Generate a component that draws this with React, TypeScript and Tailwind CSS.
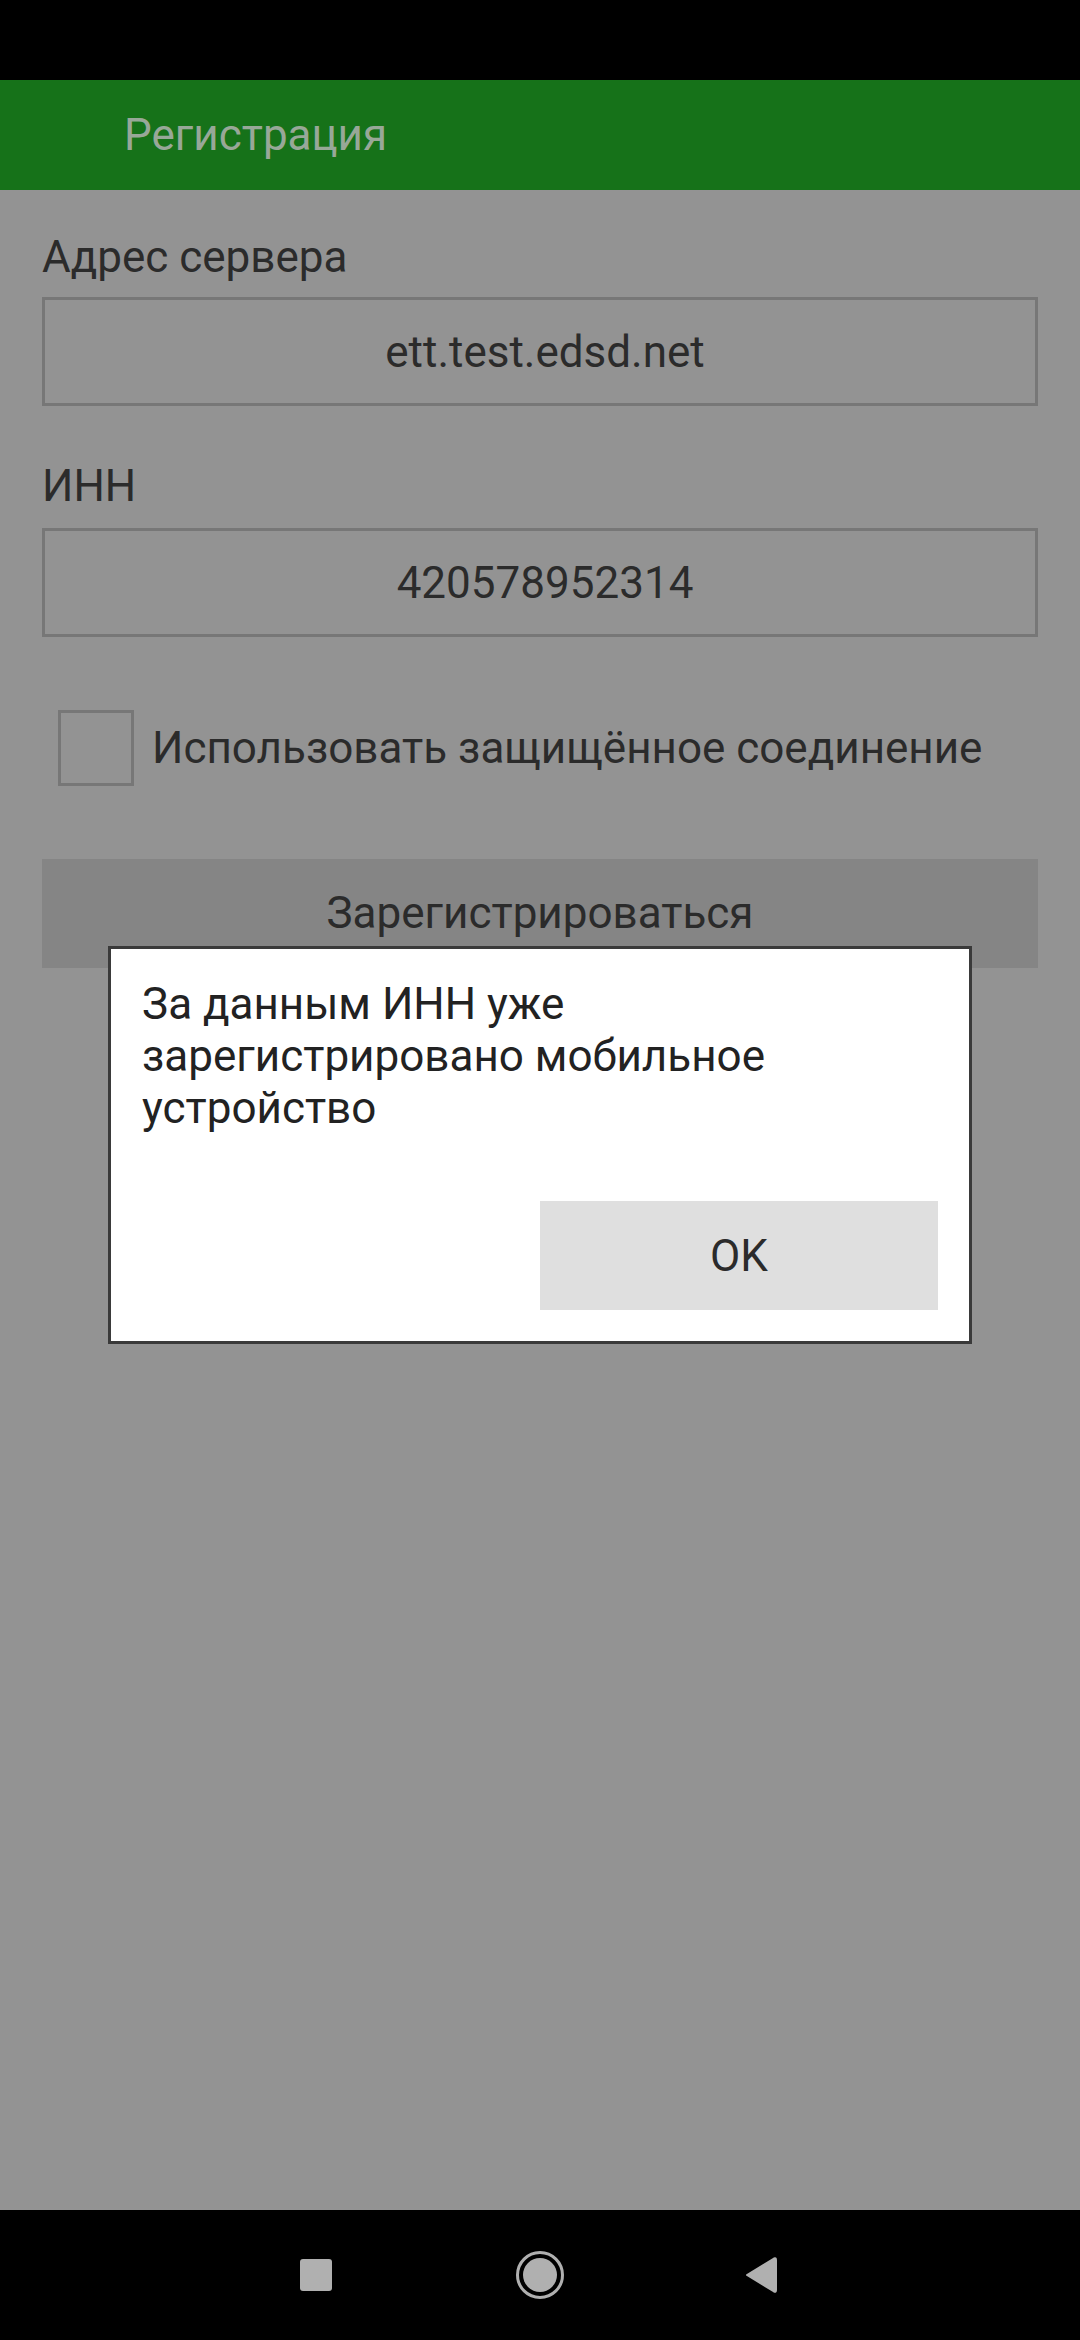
export default function App() {
    return (
        <div className="relative w-[1080px] h-[2340px] flex flex-col bg-[#939393] font-[Roboto,sans-serif] text-[#2b2b2b] overflow-hidden">
            {/* status bar */}
            <div className="h-[80px] bg-black" />

            {/* toolbar */}
            <div className="h-[110px] bg-[#167219] flex items-center pl-[124px]">
                <span className="text-[44px] leading-none text-[#98a898]">Регистрация</span>
            </div>

            {/* form */}
            <div className="flex-1 flex flex-col px-[42px] pt-[41px]">
                <div className="text-[44px] leading-[52px]">Адрес сервера</div>
                <div className="mt-[14px] h-[109px] border-[3px] border-[#777777] flex items-center justify-center pl-[10px] text-[44px]">
                    ett.test.edsd.net
                </div>

                <div className="mt-[54px] text-[44px] leading-[52px]">ИНН</div>
                <div className="mt-[16px] h-[109px] border-[3px] border-[#777777] flex items-center justify-center pl-[10px] text-[44px]">
                    420578952314
                </div>

                <div className="mt-[73px] flex items-center">
                    <div className="ml-[16px] w-[76px] h-[76px] border-[3px] border-[#777777]" />
                    <span className="ml-[18px] text-[44px] leading-[52px]">Использовать защищённое соединение</span>
                </div>

                <div className="mt-[73px] h-[109px] bg-[#858585] flex items-center justify-center text-[44px] pb-[2px]">
                    Зарегистрироваться
                </div>
            </div>

            {/* nav bar */}
            <div className="h-[130px] bg-black flex items-center">
                <div className="ml-[300px] w-[32px] h-[32px] rounded-[3px] bg-[#b0b0b0]" />
                <div className="ml-[184px] w-[48px] h-[48px] rounded-full border-[3px] border-[#b0b0b0] flex items-center justify-center">
                    <div className="w-[34px] h-[34px] rounded-full bg-[#b0b0b0]" />
                </div>
                <svg className="ml-[181px]" width="32" height="38" viewBox="0 0 32 38">
                    <path d="M2 19 L29 2.5 Q31 1.5 31 4 L31 34 Q31 36.5 29 35.5 Z" fill="#b0b0b0" stroke="#b0b0b0" strokeWidth="2" strokeLinejoin="round" />
                </svg>
            </div>

            {/* alert dialog */}
            <div className="absolute left-[108px] top-[946px] w-[864px] h-[398px] bg-white border-[3px] border-[#3a3a3a] flex flex-col pt-[29px] px-[31px] pb-[31px]">
                <p className="w-[660px] text-[44px] leading-[52px] text-[#222222]">
                    За данным ИНН уже зарегистрировано мобильное устройство
                </p>
                <div className="mt-auto flex justify-end">
                    <div className="w-[398px] h-[109px] bg-[#dfdfdf] flex items-center justify-center text-[44px] text-[#2b2b2b]">
                        OK
                    </div>
                </div>
            </div>
        </div>
    );
}
